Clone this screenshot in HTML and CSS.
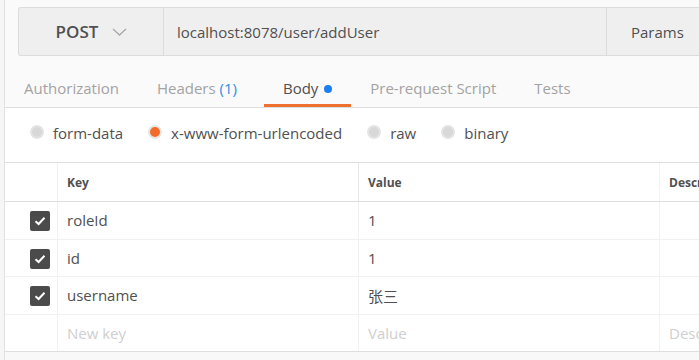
FILE: index.html
```html
<!DOCTYPE html>
<html lang="en">
<head>
    <meta charset="UTF-8">
    <title>Request - Body</title>
    <link rel="stylesheet" href="styles.css">
</head>
<body>
    <div class="side"></div>
    <div class="main">
        <div class="request-area">
            <div class="request-bar">
                <div class="method">
                    <span>POST</span>
                    <svg class="chevron" width="15" height="8" viewBox="0 0 15 8"><path d="M1 1 L7.5 7 L14 1" fill="none" stroke="#a8a8a8" stroke-width="1.3"/></svg>
                </div>
                <div class="url">localhost:8078/user/addUser</div>
                <div class="params">Params</div>
            </div>
        </div>

        <div class="tabs">
            <div class="tab">Authorization</div>
            <div class="tab headers">Headers <span class="count">(1)</span></div>
            <div class="tab active">Body <span class="dot"></span></div>
            <div class="tab">Pre-request Script</div>
            <div class="tab">Tests</div>
        </div>

        <div class="body-types">
            <label class="radio"><span class="circle"></span>form-data</label>
            <label class="radio"><span class="circle checked"></span>x-www-form-urlencoded</label>
            <label class="radio"><span class="circle"></span>raw</label>
            <label class="radio"><span class="circle"></span>binary</label>
        </div>

        <div class="kv-table">
            <div class="kv-row head">
                <div class="cell check"></div>
                <div class="cell key">Key</div>
                <div class="cell value">Value</div>
                <div class="cell desc">Description</div>
            </div>
            <div class="kv-row">
                <div class="cell check"><span class="box"><svg width="12" height="10" viewBox="0 0 12 10"><path d="M1.5 5.2 L4.6 8 L10.5 1.8" fill="none" stroke="#fff" stroke-width="2"/></svg></span></div>
                <div class="cell key">roleId</div>
                <div class="cell value">1</div>
                <div class="cell desc"></div>
            </div>
            <div class="kv-row">
                <div class="cell check"><span class="box"><svg width="12" height="10" viewBox="0 0 12 10"><path d="M1.5 5.2 L4.6 8 L10.5 1.8" fill="none" stroke="#fff" stroke-width="2"/></svg></span></div>
                <div class="cell key">id</div>
                <div class="cell value">1</div>
                <div class="cell desc"></div>
            </div>
            <div class="kv-row">
                <div class="cell check"><span class="box"><svg width="12" height="10" viewBox="0 0 12 10"><path d="M1.5 5.2 L4.6 8 L10.5 1.8" fill="none" stroke="#fff" stroke-width="2"/></svg></span></div>
                <div class="cell key">username</div>
                <div class="cell value">张三</div>
                <div class="cell desc"></div>
            </div>
            <div class="kv-row empty">
                <div class="cell check"></div>
                <div class="cell key">New key</div>
                <div class="cell value">Value</div>
                <div class="cell desc">Description</div>
            </div>
        </div>
        <div class="below"></div>
    </div>
</body>
</html>
```

FILE: styles.css
```css
body {
    margin: 0;
    font-family: "Open Sans", "Noto Sans CJK SC", sans-serif;
    color: #505050;
    display: flex;
    height: 360px;
    overflow: hidden;
    background-color: #fff;
}

.side {
    width: 4px;
    background-color: #f6f6f6;
    border-right: 1px solid #e2e2e2;
}

.main {
    flex: 1;
    display: flex;
    flex-direction: column;
    min-width: 0;
}

/* request bar */
.request-area {
    background-color: #fafafa;
    padding: 7px 0 0 13px;
}

.request-bar {
    display: flex;
    height: 47px;
    border: 1px solid #dcdcdc;
    border-right: 0;
    border-radius: 3px 0 0 3px;
    background-color: #efefef;
}

.method {
    width: 143px;
    border-right: 1px solid #dcdcdc;
    display: flex;
    align-items: center;
    justify-content: center;
    gap: 14px;
    font-size: 17px;
    font-weight: 600;
    color: #505050;
    padding-left: 1px;
}

.url {
    flex: 1;
    display: flex;
    align-items: center;
    padding-left: 13px;
    font-size: 15px;
}

.params {
    width: 68px;
    border-left: 1px solid #dcdcdc;
    display: flex;
    align-items: center;
    padding-left: 24px;
    font-size: 15px;
}

/* tabs */
.tabs {
    display: flex;
    background-color: #fafafa;
    border-bottom: 1px solid #dedede;
}

.tab {
    padding: 22px 19px 6px;
    line-height: 20px;
    font-size: 15px;
    color: #a3a3a3;
    border-bottom: 3px solid transparent;
    white-space: nowrap;
}

.tab.headers {
    padding-right: 27px;
}

.tab .count {
    color: #2d8fe2;
}

.tab.active {
    color: #505050;
    border-bottom-color: #f07030;
}

.dot {
    display: inline-block;
    width: 8px;
    height: 8px;
    border-radius: 50%;
    background-color: #1a7ff0;
    margin-left: 2px;
    vertical-align: 1px;
}

/* body type radios */
.body-types {
    display: flex;
    gap: 25px;
    padding: 15px 0 19px 25px;
    line-height: 20px;
    font-size: 15px;
}

.radio {
    display: flex;
    align-items: center;
    gap: 9px;
}

.circle {
    width: 10px;
    height: 10px;
    border-radius: 50%;
    background-color: #d8d8d8;
    border: 2px solid #e4e4e4;
    margin-top: -3px;
}

.circle.checked {
    background-color: #f26b2a;
    border-color: #e6e6e6;
}

/* key / value table */
.kv-table {
    border-top: 1px solid #dedede;
    border-bottom: 1px solid #dedede;
}

.kv-row {
    display: flex;
    height: 36.5px;
    border-bottom: 1px solid #f1f1f1;
    font-size: 15px;
}

.kv-row:last-child {
    border-bottom: 0;
}

.kv-row.head {
    height: 38px;
    border-bottom: 1px solid #dedede;
    font-size: 12px;
    font-weight: 700;
}

.kv-row.empty {
    color: #cfcfcf;
}

.cell {
    display: flex;
    align-items: center;
    padding-left: 9px;
    white-space: nowrap;
    overflow: hidden;
}

.cell.check {
    width: 52px;
    padding: 0;
    justify-content: flex-end;
    padding-right: 7px;
    box-sizing: border-box;
}

.cell.key,
.cell.value {
    width: 301px;
    box-sizing: border-box;
    border-left: 1px solid #f1f1f1;
}

.cell.desc {
    flex: 1;
    border-left: 1px solid #f3f3f3;
}

.head .cell.value {
    border-left-color: #e6e6e6;
}

.box {
    width: 20px;
    height: 20px;
    border-radius: 2px;
    background-color: #4b4b4b;
    display: flex;
    align-items: center;
    justify-content: center;
    margin-top: 2px;
}

.below {
    flex: 1;
    background-color: #f8f8f8;
}
```
